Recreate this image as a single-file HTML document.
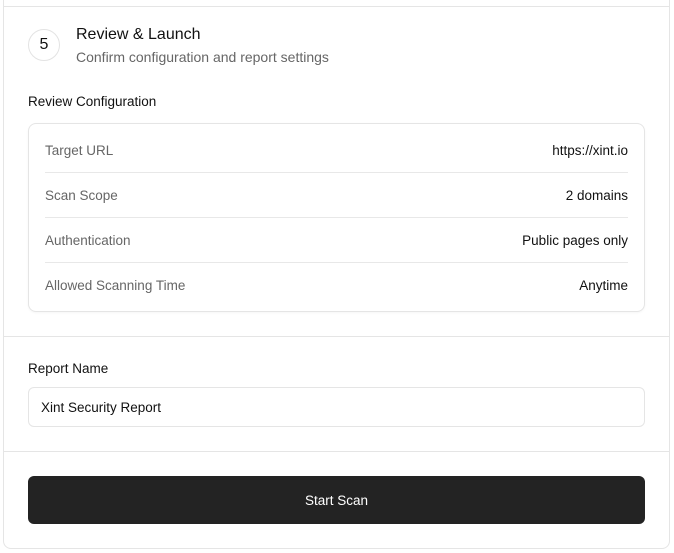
<!DOCTYPE html>
<html><head><style>
*{margin:0;padding:0;box-sizing:border-box}
body{width:674px;height:553px;background:#fff;font-family:"Liberation Sans",sans-serif;position:relative;overflow:hidden;color:#111}
.card{position:absolute;left:3px;top:-20px;width:667px;height:569px;border:1px solid #e5e5e5;border-radius:8px}
.hl{position:absolute;left:4px;width:665px;height:1px;background:#e5e5e5}
.a{position:absolute;white-space:nowrap}
.circ{position:absolute;left:28px;top:29px;width:32px;height:32px;border:1px solid #e3e3e3;border-radius:50%;text-align:center;line-height:30px;font-size:16px}
.box{position:absolute;left:28px;top:123px;width:617px;height:189px;border:1px solid #e5e5e5;border-radius:8px;box-shadow:0 1px 2px rgba(0,0,0,.04)}
.row{position:absolute;left:16px;right:16px;height:45px;font-size:13.5px;line-height:45px}
.row .k{color:#666;position:absolute;left:0}
.row .v{color:#111;position:absolute;right:0}
.row.b{border-bottom:1px solid #e8e8e8}
</style></head><body>
<div class="card"></div>
<div class="hl" style="top:6px"></div>
<div class="hl" style="top:336px"></div>
<div class="hl" style="top:451px"></div>
<div class="circ">5</div>
<div class="a" style="left:76px;top:26px;font-size:16px;color:#111">Review &amp; Launch</div>
<div class="a" style="left:76px;top:49px;font-size:14px;color:#666">Confirm configuration and report settings</div>
<div class="a" style="left:28px;top:94px;font-size:13.5px;color:#111">Review Configuration</div>
<div class="box">
<div class="row b" style="top:4px"><span class="k">Target URL</span><span class="v">https://xint.io</span></div>
<div class="row b" style="top:49px"><span class="k">Scan Scope</span><span class="v">2 domains</span></div>
<div class="row b" style="top:94px"><span class="k">Authentication</span><span class="v">Public pages only</span></div>
<div class="row" style="top:139px"><span class="k">Allowed Scanning Time</span><span class="v">Anytime</span></div>
</div>
<div class="a" style="left:28px;top:361px;font-size:13.5px">Report Name</div>
<div style="position:absolute;left:28px;top:387px;width:617px;height:40px;border:1px solid #e5e5e5;border-radius:6px;font-size:13.5px;line-height:40px;padding-left:12px">Xint Security Report</div>
<div style="position:absolute;left:28px;top:476px;width:617px;height:48px;background:#232323;border-radius:6px;color:#fff;font-size:13.5px;line-height:49px;text-align:center">Start Scan</div>
</body></html>
